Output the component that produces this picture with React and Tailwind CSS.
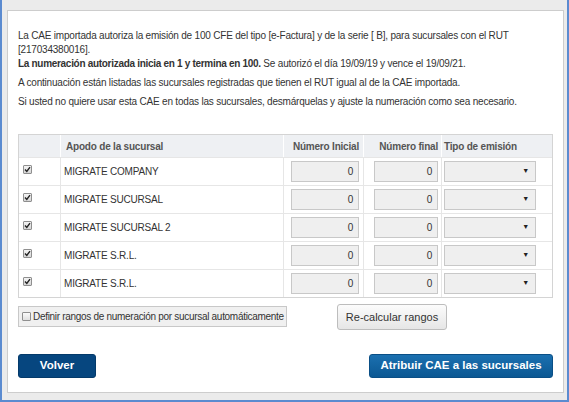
import React from "react";

const rows = [
  "MIGRATE COMPANY",
  "MIGRATE SUCURSAL",
  "MIGRATE SUCURSAL 2",
  "MIGRATE S.R.L.",
  "MIGRATE S.R.L.",
];

function Check({ checked }) {
  return (
    <span className="flex w-[9px] h-[9px] border border-[#8f8f8f] rounded-[1px] bg-gradient-to-b from-[#f4f4f4] to-[#d6d6d6] items-center justify-center shrink-0">
      {checked && (
        <svg width="7" height="7" viewBox="0 0 7 7">
          <path d="M1 3.6 L2.8 5.4 L6 1.2" stroke="#222" strokeWidth="1.4" fill="none" />
        </svg>
      )}
    </span>
  );
}

export default function App() {
  return (
    <div
      className="w-[569px] h-[402px] bg-[#ebebeb] border-x-2 border-b-2 border-[#5b8bd0] pt-[10px] pl-[5px] pr-[3px] pb-[7px] text-[#333] text-[10px] tracking-[-0.2px]"
      style={{ fontFamily: '"Liberation Sans", Arial, sans-serif' }}
    >
      <div className="h-full bg-white border border-[#cdcdcd] px-[10px] pt-[18px] flex flex-col">
        <p className="leading-[14px]">
          La CAE importada autoriza la emisión de 100 CFE del tipo [e-Factura] y de la serie [ B], para sucursales con el RUT<br />[217034380016].
          <br />
          <b className="tracking-[-0.3px]">La numeración autorizada inicia en 1 y termina en 100.</b> Se autorizó el día 19/09/19 y vence el 19/09/21.
        </p>
        <p className="leading-[14px] mt-[5px]">
          A continuación están listadas las sucursales registradas que tienen el RUT igual al de la CAE importada.
        </p>
        <p className="leading-[14px] mt-[5px]">
          Si usted no quiere usar esta CAE en todas las sucursales, desmárquelas y ajuste la numeración como sea necesario.
        </p>

        <div className="mt-[25px] border border-[#d4d4d4]">
          <div className="flex h-[22px] bg-[#eef0f3] font-bold text-[#555] items-center">
            <div className="w-[42px] h-full border-r border-white"></div>
            <div className="w-[223px] h-full border-r border-white pl-[5px] flex items-center">Apodo de la sucursal</div>
            <div className="w-[80px] h-full border-r border-white pr-[4px] flex items-center justify-end">Número Inicial</div>
            <div className="w-[78px] h-full border-r border-white pr-[3px] flex items-center justify-end">Número final</div>
            <div className="flex-1 h-full pl-[2px] flex items-center">Tipo de emisión</div>
          </div>
          {rows.map((name, i) => (
            <div key={i} className="flex h-[28px] items-center border-t border-[#e6e6e6]">
              <div className="w-[42px] h-full border-r border-[#e6e6e6] pl-[4px] pt-[7px] flex items-start">
                <Check checked />
              </div>
              <div className="w-[223px] h-full border-r border-[#e6e6e6] pl-[3px] flex items-center">{name}</div>
              <div className="w-[80px] h-full border-r border-[#e6e6e6] pl-[7px] flex items-center">
                <div className="w-[68px] h-[21px] bg-[#efefef] border border-[#c8c8c8] flex items-center justify-end pr-[5px]">0</div>
              </div>
              <div className="w-[78px] h-full border-r border-[#e6e6e6] pl-[10px] flex items-center">
                <div className="w-[64px] h-[21px] bg-[#efefef] border border-[#c8c8c8] flex items-center justify-end pr-[5px]">0</div>
              </div>
              <div className="flex-1 h-full pl-[2px] flex items-center">
                <div className="w-[92px] h-[21px] bg-[#efefef] border border-[#c8c8c8] flex items-center justify-end pr-[6px] text-[7px] text-[#222]">▼</div>
              </div>
            </div>
          ))}
        </div>

        <div className="flex items-start mt-[6px]">
          <div className="w-[269px] h-[21px] mt-[2px] bg-[#f0f0f0] border border-[#c8c8c8] flex items-center pl-[3px] gap-[2px] whitespace-nowrap tracking-[-0.3px]">
            <span className="flex w-[9px] h-[9px] border border-[#8f8f8f] rounded-[1px] bg-gradient-to-b from-[#fafafa] to-[#e0e0e0] shrink-0"></span>
            <span>Definir rangos de numeración por sucursal automáticamente</span>
          </div>
          <button className="ml-[50px] w-[110px] h-[26px] rounded-[3px] border border-[#bdbdbd] bg-gradient-to-b from-[#fcfcfc] to-[#e6e6e6] text-[11px] tracking-normal text-[#333]">
            Re-calcular rangos
          </button>
        </div>

        <div className="flex justify-between mt-[24px]">
          <button className="w-[78px] h-[24px] rounded-[3px] bg-[#06467f] border border-[#043a6a] text-white font-bold text-[11.5px] tracking-normal">
            Volver
          </button>
          <button className="w-[184px] h-[24px] rounded-[3px] bg-gradient-to-b from-[#1b70b0] to-[#0b5893] border border-[#0a4f86] text-white font-bold text-[11.5px] tracking-normal">
            Atribuir CAE a las sucursales
          </button>
        </div>
      </div>
    </div>
  );
}
